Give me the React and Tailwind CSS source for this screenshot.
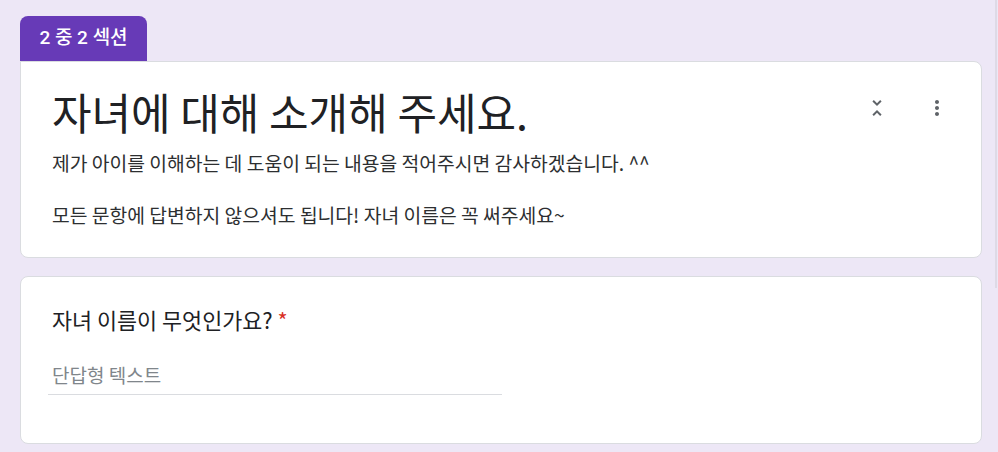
import React from "react";

const KR = { fontFamily: '"Noto Sans CJK KR", Roboto, sans-serif' };

export default function App() {
  return (
    <div className="relative w-[998px] h-[452px] overflow-hidden bg-[#ede7f6] pl-[20px] pr-[16px] pt-[16px] flex flex-col" style={KR}>
      <div className="w-[127px] h-[45px] rounded-t-[8px] bg-[#673ab7] text-white text-[19px] font-medium flex items-center justify-center" style={{ fontFamily: 'Roboto, "Noto Sans CJK KR", sans-serif' }}>
        2 중 2 섹션
      </div>
      <div className="h-[197px] bg-white border border-[#dadce0] rounded-b-[8px] rounded-tr-[8px] flex pl-[31px] pr-[32px]">
        <div className="flex-1 flex flex-col pt-[21px]">
          <div className="text-[43px] leading-[56px] text-[#202124]">자녀에 대해 소개해 주세요.</div>
          <div className="mt-[10px] text-[19.3px] leading-[28px] text-[#2d2f31]">제가 아이를 이해하는 데 도움이 되는 내용을 적어주시면 감사하겠습니다. ^^</div>
          <div className="mt-[24px] text-[19.3px] leading-[28px] text-[#2d2f31]">모든 문항에 답변하지 않으셔도 됩니다! 자녀 이름은 꼭 써주세요~</div>
        </div>
        <div className="flex items-start pt-[34px] gap-[36px]">
          <svg width="24" height="24" viewBox="0 0 24 24" fill="#5f6368">
            <path d="M7.41 18.59L8.83 20 12 16.83 15.17 20l1.41-1.41L12 14l-4.59 4.59zm9.18-13.18L15.17 4 12 7.17 8.83 4 7.41 5.41 12 10l4.59-4.59z" />
          </svg>
          <svg width="24" height="24" viewBox="0 0 24 24" fill="#5f6368">
            <path d="M12 8c1.1 0 2-.9 2-2s-.9-2-2-2-2 .9-2 2 .9 2 2 2zm0 2c-1.1 0-2 .9-2 2s.9 2 2 2 2-.9 2-2-.9-2-2-2zm0 6c-1.1 0-2 .9-2 2s.9 2 2 2 2-.9 2-2-.9-2-2-2z" />
          </svg>
        </div>
      </div>
      <div className="mt-[18px] h-[168px] bg-white border border-[#dadce0] rounded-[8px] pl-[31px] pt-[28px]">
        <div className="text-[21.8px] leading-[30px] text-[#202124]">
          자녀 이름이 무엇인가요? <span className="text-[#d93025]">*</span>
        </div>
        <div className="mt-[26px] ml-[-4px] pl-[4px] w-[454px] border-b border-[#dadce0] pb-[5px] text-[19px] leading-[28px] text-[#80868b]">
          단답형 텍스트
        </div>
      </div>
      <div className="absolute right-[1px] top-0 w-[2px] h-[288px] bg-[#dedae6]" />
    </div>
  );
}
